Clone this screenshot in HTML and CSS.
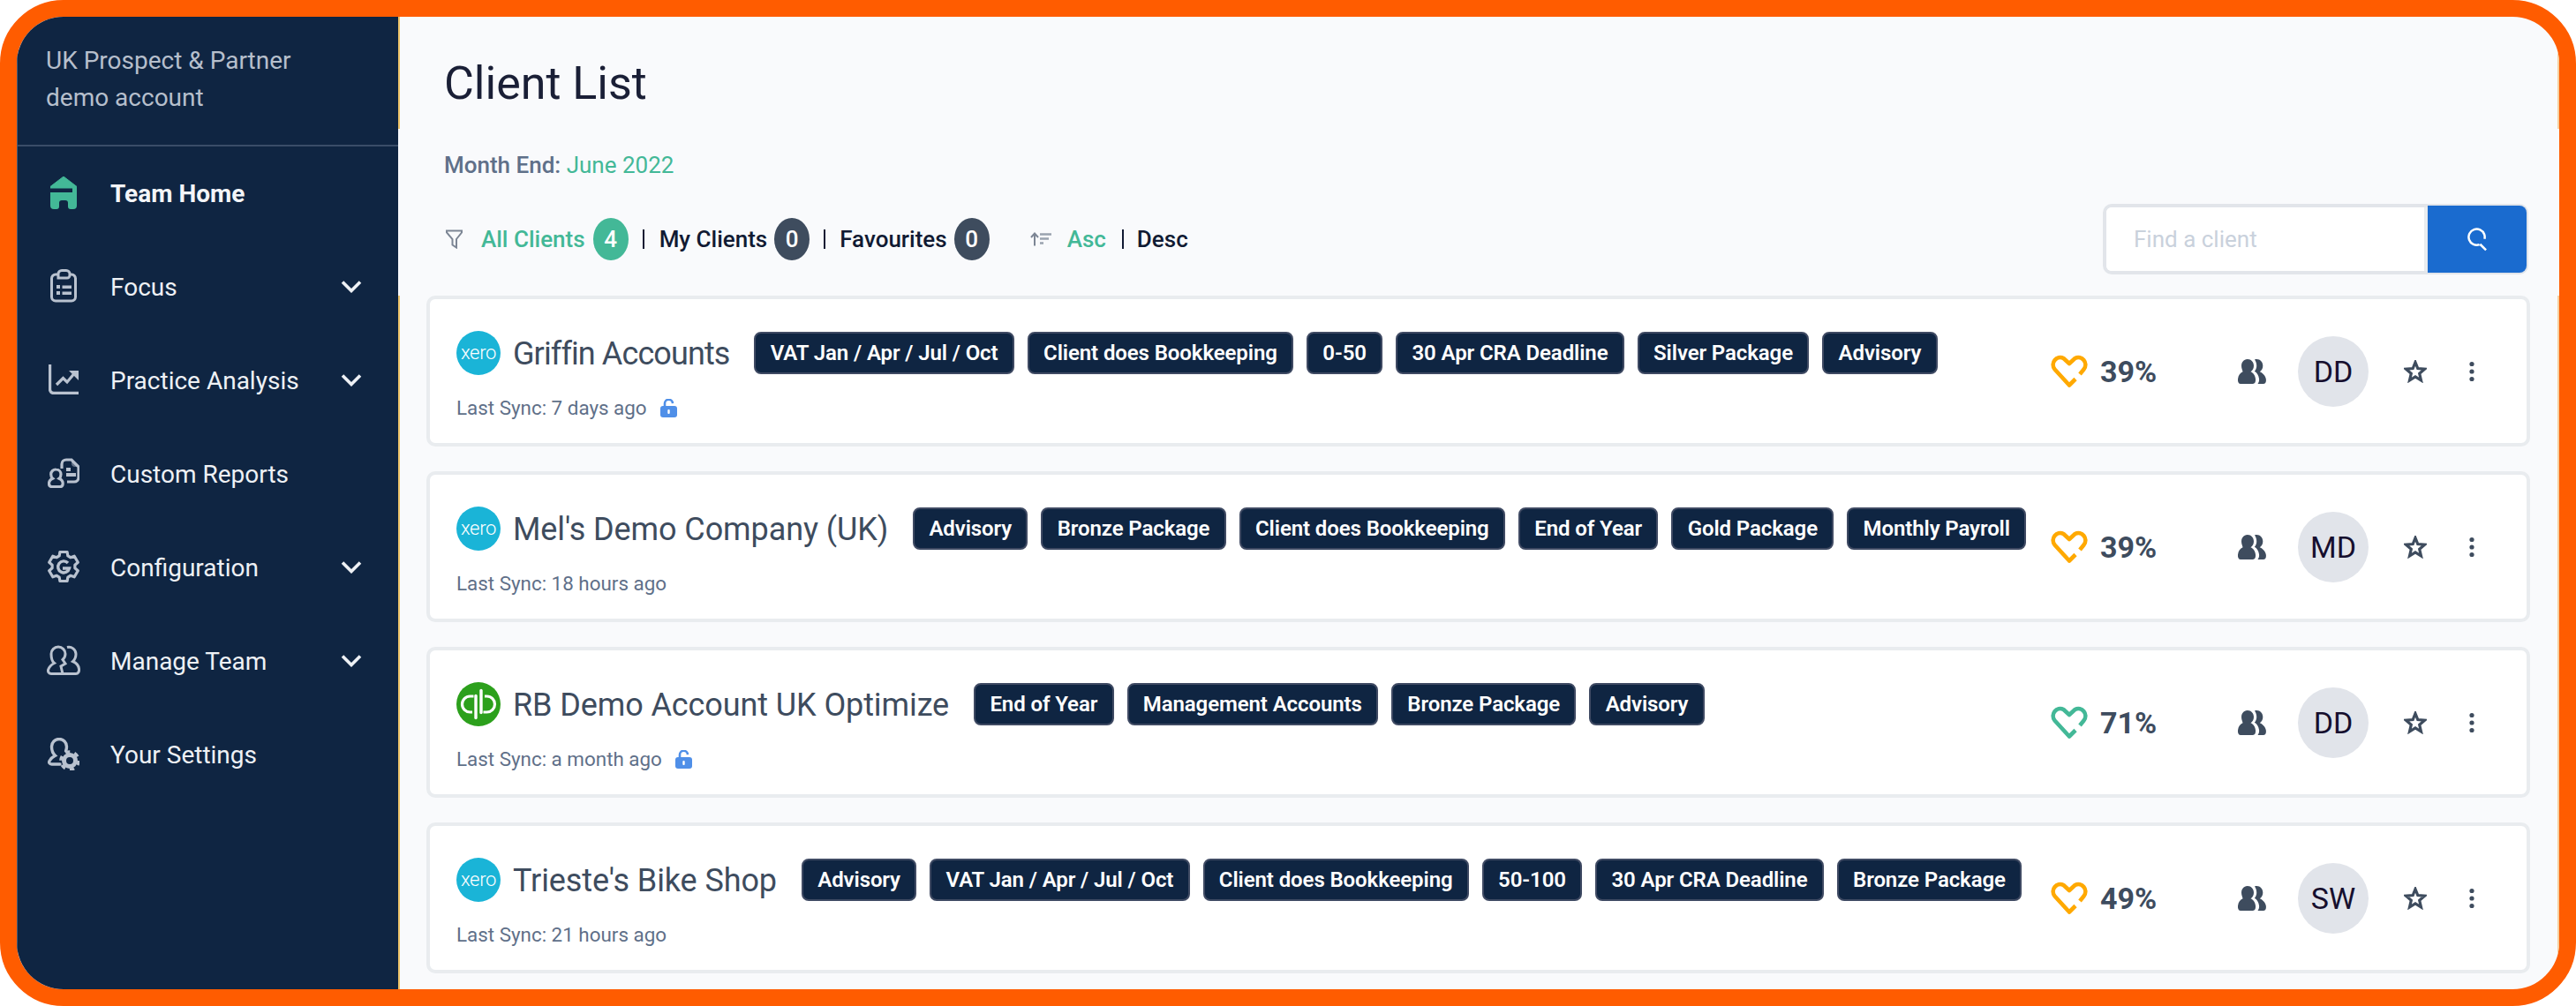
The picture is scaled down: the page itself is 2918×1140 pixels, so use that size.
FILE: index.html
```html
<!DOCTYPE html>
<html lang="en">
<head>
<meta charset="utf-8">
<title>Client List</title>
<link rel="stylesheet" href="styles.css">
</head>
<body>
<svg class="defs" width="0" height="0" aria-hidden="true">
  <defs>
    <symbol id="i-chev" viewBox="0 0 24 15"><path d="M2 2.500 12 12.500 22 2.500" fill="none" stroke="currentColor" stroke-width="3.600"/></symbol>
    <symbol id="i-heart" viewBox="0 0 42 37"><path d="M28 27.500 21 34.500 4.500 16.500C-1 9 7 0 14.500 4L21 10 27.500 4C35 0 43 9 37.500 16.500L33 22" fill="none" stroke="currentColor" stroke-width="4.600" stroke-linejoin="round"/></symbol>
    <symbol id="i-group" viewBox="0 0 32 28"><path d="M11 0c4 0 7 3.200 7 7.500 0 3-1.400 5.500-3.500 6.800 2.900 1.400 5 3.700 5.500 8.200.3 3-.6 5.500-3 5.500H3c-2.400 0-3.300-2.500-3-5.500.5-4.500 2.600-6.800 5.500-8.200C5.400 13 4 10.500 4 7.500 4 3.200 7 0 11 0Z" fill="currentColor"/><path d="M19 .4c.8-.3 1.500-.4 2.300-.4 4 0 7 3.200 7 7.500 0 3-1.400 5.500-3.500 6.800 3.200 1.500 6.400 4.300 7 8.200.5 3-.6 5.500-3 5.500h-6.300c1.400-1.700 1.800-3.800 1.500-6-.6-4-2.500-6.700-5.200-8.200 1.700-1.800 2.400-4 2.400-6.300 0-2.800-.8-5.300-2.200-7.100Z" fill="currentColor"/></symbol>
    <symbol id="i-star" viewBox="0 0 26 26"><path d="M13 2.500 15.800 9.500 23.500 10.200 17.700 15.300 19.500 23 13 19 6.500 23 8.300 15.300 2.500 10.200 10.200 9.500Z" fill="none" stroke="currentColor" stroke-width="3.200" stroke-linejoin="miter"/></symbol>
    <symbol id="i-dots" viewBox="0 0 8 24"><circle cx="4" cy="3.500" r="2.600" fill="currentColor"/><circle cx="4" cy="12" r="2.600" fill="currentColor"/><circle cx="4" cy="20.500" r="2.600" fill="currentColor"/></symbol>
    <symbol id="i-lock" viewBox="0 0 19 21"><path d="M5 8V5.500a4.500 4.500 0 0 1 9-.4" fill="none" stroke="currentColor" stroke-width="2.600"/><rect x="0" y="8" width="19" height="13" rx="3" fill="currentColor"/><rect x="8.300" y="12" width="2.400" height="5" rx="1" fill="#fff"/></symbol>
    <symbol id="i-qb" viewBox="0 0 50 50"><path d="M19.500 16H15.500a9 9 0 0 0 0 18H18" fill="none" stroke="#fff" stroke-width="3.200"/><path d="M22 15.500V40.500" fill="none" stroke="#fff" stroke-width="3.400" stroke-linecap="round"/><path d="M30.500 34H34.500a9 9 0 0 0 0-18H32" fill="none" stroke="#fff" stroke-width="3.200"/><path d="M28 9.500V34.500" fill="none" stroke="#fff" stroke-width="3.400" stroke-linecap="round"/></symbol>
  </defs>
</svg>
<div class="frame">
  <aside class="sidebar">
    <div class="account">UK Prospect &amp; Partner<br>demo account</div>
    <nav class="nav">
      <a class="nav-item active">
        <span class="nav-icon"><svg width="30" height="37" viewBox="0 0 30 37"><path d="M15 0 30 11.500V13H0V11.500Z" fill="#43b897" stroke="#43b897" stroke-linejoin="round"/><path d="M0 18H30V33a4 4 0 0 1-4 4H23a3 3 0 0 1-3-3V30a3 3 0 0 0-3-3H13a3 3 0 0 0-3 3v4a3 3 0 0 1-3 3H4a4 4 0 0 1-4-4Z" fill="#43b897"/><path d="M25 13h5v5h-5Z" fill="#43b897"/></svg></span>
        <span class="nav-label">Team Home</span>
      </a>
      <a class="nav-item">
        <span class="nav-icon"><svg width="30" height="38" viewBox="0 0 30 38"><path d="M9 6H6a4.500 4.500 0 0 0-4.500 4.500v21A4.500 4.500 0 0 0 6 36h18a4.500 4.500 0 0 0 4.500-4.500v-21A4.500 4.500 0 0 0 24 6h-1.500" fill="none" stroke="currentColor" stroke-width="3"/><path d="M9 10V5.500A4 4 0 0 1 13 1.500h5a4 4 0 0 1 4 4V7a3 3 0 0 1-3 3H9Z" fill="none" stroke="currentColor" stroke-width="3"/><path d="M7 18h4v4H7ZM7 25h4v4H7ZM13.500 18.500H24V22H13.500ZM13.500 25.500H24V29H13.500Z" fill="currentColor"/></svg></span>
        <span class="nav-label">Focus</span>
        <svg class="chev"><use href="#i-chev"/></svg>
      </a>
      <a class="nav-item">
        <span class="nav-icon"><svg width="34" height="34" viewBox="0 0 34 34"><path d="M1.500 0V28a4.500 4.500 0 0 0 4.500 4.500H34" fill="none" stroke="currentColor" stroke-width="3.400"/><path d="M9 23 16.500 15.500 21 20 31 8" fill="none" stroke="currentColor" stroke-width="3.200"/><path d="M23 7H34V18Z" fill="currentColor"/></svg></span>
        <span class="nav-label">Practice Analysis</span>
        <svg class="chev"><use href="#i-chev"/></svg>
      </a>
      <a class="nav-item">
        <span class="nav-icon"><svg width="36" height="34" viewBox="0 0 36 34"><path d="M16 12V7a5 5 0 0 1 5-5h6l8 8v12a5 5 0 0 1-5 5H22" fill="none" stroke="currentColor" stroke-width="3.200"/><path d="M27 2v4a4 4 0 0 0 4 4h4Z" fill="currentColor" opacity=".5"/><path d="M21 11h5v4h-5ZM21 17h11v4H21Z" fill="currentColor"/><path d="M9.500 13a5.500 5.500 0 0 1 5.500 5.500c0 2.200-.8 3.700-2 4.700 2.200 1 4.200 2.800 4.200 5.600 0 2.700-1 3.700-3 3.700H4.500c-2 0-3-1-3-3.700 0-2.800 2-4.600 4.200-5.600-1.200-1-2-2.500-2-4.700A5.500 5.500 0 0 1 9.500 13Z" fill="none" stroke="currentColor" stroke-width="3.200"/></svg></span>
        <span class="nav-label">Custom Reports</span>
      </a>
      <a class="nav-item">
        <span class="nav-icon"><svg width="36" height="38" viewBox="0 0 36 38"><path d="M13.130 6.950 13.890 2.500H22.110L22.870 6.950 26 8.760 30.200 7.200 34.300 14.300 30.870 17.190V20.810L34.300 23.700 30.200 30.800 26 29.240 22.870 31.050 22.110 35.500H13.890L13.130 31.050 10 29.240 5.800 30.800 1.700 23.700 5.130 20.810V17.190L1.700 14.300 5.800 7.200 10 8.760Z" fill="none" stroke="currentColor" stroke-width="3.200" stroke-linejoin="round"/><path d="M23 15A6.500 6.500 0 1 0 24.500 21H17" fill="none" stroke="currentColor" stroke-width="3.400"/></svg></span>
        <span class="nav-label">Configuration</span>
        <svg class="chev"><use href="#i-chev"/></svg>
      </a>
      <a class="nav-item">
        <span class="nav-icon"><svg width="38" height="34" viewBox="0 0 38 34"><path d="M13 2a8 8 0 0 1 8 8c0 3-1.200 5-3 6.500L21 21l-5 3 2 8.500H5a3.500 3.500 0 0 1-3.400-4.500c1-3.500 3.900-6 6.900-7.500C6 18.500 5 15 5 10a8 8 0 0 1 8-8Z" fill="none" stroke="currentColor" stroke-width="3"/><path d="M23 2.500A8 8 0 0 1 33 10c0 3.500-1.300 6.500-3.500 8.500 3.500 1.500 6.500 4.500 7 8.500.4 3-1 5.500-3.500 5.500H18" fill="none" stroke="currentColor" stroke-width="3"/></svg></span>
        <span class="nav-label">Manage Team</span>
        <svg class="chev"><use href="#i-chev"/></svg>
      </a>
      <a class="nav-item">
        <span class="nav-icon"><svg width="36" height="37" viewBox="0 0 36 37"><path d="M14 30H4.500c-2.500 0-3.500-2-2.300-4 1.300-2.200 4-4.500 6.300-5.700C6 18 4.500 14.500 4.500 10a8.500 8.500 0 0 1 17 0c0 2-.3 3.500-.9 5" fill="none" stroke="currentColor" stroke-width="3.400" stroke-linecap="round"/><circle cx="25" cy="26" r="6.500" fill="none" stroke="currentColor" stroke-width="5"/><circle cx="25" cy="26" r="10" fill="none" stroke="currentColor" stroke-width="3.600" stroke-dasharray="5.200 5.270"/></svg></span>
        <span class="nav-label">Your Settings</span>
      </a>
    </nav>
  </aside>
  <main class="main">
    <section class="head">
      <h1 class="title">Client List</h1>
    </section>
    <section class="controls">
      <div class="month"><span class="month-key">Month End:</span> <span class="green">June 2022</span></div>
      <div class="toolbar">
        <div class="filters">
          <svg class="filter-icon" width="19" height="22" viewBox="0 0 19 22"><path d="M1 1.500H18V3.500L12 11V20.500L7.500 17.500V11L1 3.500Z" fill="none" stroke="#7c8594" stroke-width="2"/></svg>
          <span class="flt green">All Clients</span><span class="badge badge-green">4</span>
          <span class="sep"></span>
          <span class="flt">My Clients</span><span class="badge">0</span>
          <span class="sep sep-tight"></span>
          <span class="flt">Favourites</span><span class="badge">0</span>
          <svg class="sort-icon" width="24" height="16" viewBox="0 0 24 16"><path d="M5 15.500V2M1 6 5 1.500 9 6" fill="none" stroke="#7c8594" stroke-width="2"/><path d="M11 2.500H24M11 7.500H21M11 12.500H15" fill="none" stroke="#9aa3af" stroke-width="2.400"/></svg>
          <span class="flt green">Asc</span>
          <span class="sep sep-sort"></span>
          <span class="flt">Desc</span>
        </div>
        <form class="search">
          <input class="search-input" type="text" placeholder="Find a client">
          <button class="search-btn" type="button" aria-label="Search"><svg width="23" height="28" viewBox="0 0 24 29"><circle cx="11" cy="12" r="9.500" fill="none" stroke="#fff" stroke-width="2.600" stroke-dasharray="50 10" transform="rotate(70 11 12)"/><path d="M15 20.500 22 27.500" fill="none" stroke="#fff" stroke-width="2.600"/></svg></button>
        </form>
      </div>
    </section>
    <section class="list">
      <article class="card">
        <div class="card-left">
          <div class="card-top">
            <span class="logo logo-xero">xero</span>
            <span class="name name-tight">Griffin Accounts</span>
            <span class="tags">
              <span class="tag">VAT Jan / Apr / Jul / Oct</span><span class="tag">Client does Bookkeeping</span><span class="tag">0-50</span><span class="tag">30 Apr CRA Deadline</span><span class="tag">Silver Package</span><span class="tag">Advisory</span>
            </span>
          </div>
          <div class="sync">Last Sync: 7 days ago <svg class="lock"><use href="#i-lock"/></svg></div>
        </div>
        <div class="card-right">
          <svg class="heart amber"><use href="#i-heart"/></svg><span class="pct">39%</span>
          <svg class="group"><use href="#i-group"/></svg>
          <span class="avatar">DD</span>
          <svg class="star"><use href="#i-star"/></svg>
          <svg class="dots"><use href="#i-dots"/></svg>
        </div>
      </article>
      <article class="card">
        <div class="card-left">
          <div class="card-top">
            <span class="logo logo-xero">xero</span>
            <span class="name">Mel's Demo Company (UK)</span>
            <span class="tags">
              <span class="tag">Advisory</span><span class="tag">Bronze Package</span><span class="tag">Client does Bookkeeping</span><span class="tag">End of Year</span><span class="tag">Gold Package</span><span class="tag">Monthly Payroll</span>
            </span>
          </div>
          <div class="sync">Last Sync: 18 hours ago</div>
        </div>
        <div class="card-right">
          <svg class="heart amber"><use href="#i-heart"/></svg><span class="pct">39%</span>
          <svg class="group"><use href="#i-group"/></svg>
          <span class="avatar">MD</span>
          <svg class="star"><use href="#i-star"/></svg>
          <svg class="dots"><use href="#i-dots"/></svg>
        </div>
      </article>
      <article class="card">
        <div class="card-left">
          <div class="card-top">
            <span class="logo logo-qb"><svg width="50" height="50"><use href="#i-qb"/></svg></span>
            <span class="name">RB Demo Account UK Optimize</span>
            <span class="tags">
              <span class="tag">End of Year</span><span class="tag">Management Accounts</span><span class="tag">Bronze Package</span><span class="tag">Advisory</span>
            </span>
          </div>
          <div class="sync">Last Sync: a month ago <svg class="lock"><use href="#i-lock"/></svg></div>
        </div>
        <div class="card-right">
          <svg class="heart teal"><use href="#i-heart"/></svg><span class="pct">71%</span>
          <svg class="group"><use href="#i-group"/></svg>
          <span class="avatar">DD</span>
          <svg class="star"><use href="#i-star"/></svg>
          <svg class="dots"><use href="#i-dots"/></svg>
        </div>
      </article>
      <article class="card">
        <div class="card-left">
          <div class="card-top">
            <span class="logo logo-xero">xero</span>
            <span class="name">Trieste's Bike Shop</span>
            <span class="tags">
              <span class="tag">Advisory</span><span class="tag">VAT Jan / Apr / Jul / Oct</span><span class="tag">Client does Bookkeeping</span><span class="tag">50-100</span><span class="tag">30 Apr CRA Deadline</span><span class="tag">Bronze Package</span>
            </span>
          </div>
          <div class="sync">Last Sync: 21 hours ago</div>
        </div>
        <div class="card-right">
          <svg class="heart amber"><use href="#i-heart"/></svg><span class="pct">49%</span>
          <svg class="group"><use href="#i-group"/></svg>
          <span class="avatar">SW</span>
          <svg class="star"><use href="#i-star"/></svg>
          <svg class="dots"><use href="#i-dots"/></svg>
        </div>
      </article>
    </section>
  </main>
</div>
</body>
</html>
```

FILE: styles.css
```css
* { box-sizing: border-box; }
html, body { margin: 0; padding: 0; background: #fff; }
body { font-family: Roboto, "Liberation Sans", sans-serif; overflow: hidden; }
.defs { position: absolute; }

.frame {
  width: 2918px;
  height: 1140px;
  border: 19px solid #ff5c00;
  border-radius: 72px;
  overflow: hidden;
  display: flex;
  background: #f9fafc;
}

/* Sidebar */
.sidebar {
  width: 432px;
  flex: none;
  background: #0f2542;
  border-left: 1px solid #4a5b72;
  color: #eef1f5;
}
.account {
  height: 147px;
  padding: 29px 0 0 32px;
  font-size: 28px;
  line-height: 42px;
  color: #b6bfcc;
  border-bottom: 2px solid #3a4d68;
}
.nav { margin-top: -1px; }
.nav-item {
  height: 106px;
  display: flex;
  align-items: center;
  padding: 0 41px 0 32px;
  font-size: 28px;
  color: #eef1f5;
}
.nav-item.active { font-weight: 700; color: #f3f5f8; }
.nav-icon {
  width: 40px;
  margin-right: 33px;
  flex: none;
  display: flex;
  justify-content: center;
  color: #b9c2cf;
}
.nav-label { flex: 1; padding-top: 2px; }
.chev { width: 24px; height: 15px; color: #eef1f5; }

/* Main */
.main { flex: 1; min-width: 0; display: flex; flex-direction: column; }
.head {
  height: 127px;
  padding: 46px 0 0 50px;
  border-left: 2px solid #eec46a;
  border-right: 2px solid #f6cf9e;
}
.title {
  margin: 0;
  font-size: 52px;
  line-height: 60px;
  font-weight: 400;
  color: #1a1f36;
}
.controls { height: 189px; padding: 26px 35px 0 52px; }
.month { font-size: 26px; line-height: 30px; font-weight: 400; }
.month-key { font-weight: 500; color: #5f7089; }
.green { color: #43b897; }
.toolbar {
  margin-top: 29px;
  height: 80px;
  display: flex;
  align-items: center;
  justify-content: space-between;
}
.filters { display: flex; align-items: center; font-size: 26px; font-weight: 500; color: #111a33; }
.filter-icon { margin: 0 21px 0 2px; }
.flt { white-space: nowrap; }
.badge {
  width: 40px;
  height: 48px;
  margin-left: 8px;
  border-radius: 20px / 24px;
  background: #3e4c5e;
  color: #fff;
  display: flex;
  align-items: center;
  justify-content: center;
}
.badge-green { background: #43b897; margin-left: 9px; }
.sep { width: 2px; height: 22px; margin: 0 17px 0 16px; background: #111a33; }
.sep-tight { margin: 0 16px 0 16px; }
.sep-sort { margin: 0 15px 0 18px; }
.sort-icon { margin: 0 18px 0 46px; }

.search {
  width: 482px;
  height: 80px;
  display: flex;
  border: 4px solid #e2e5ea;
  border-radius: 10px;
  background: #fff;
  margin: 0;
}
.search-input {
  flex: 1;
  min-width: 0;
  border: 0;
  outline: 0;
  border-right: 4px solid #e9ecef;
  border-radius: 6px 0 0 6px;
  background: #fff;
  padding: 0 0 0 31px;
  font: 400 26px Roboto, sans-serif;
}
.search-input::placeholder { color: #c9d1dc; opacity: 1; }
.search-btn {
  width: 112px;
  margin: -2px -2px -2px 0;
  border: 0;
  padding: 0;
  border-radius: 0 8px 8px 0;
  background: #1a6bcf;
  display: flex;
  align-items: center;
  justify-content: center;
}

/* List */
.list {
  flex: 1;
  min-height: 0;
  padding: 0 31px 0 30px;
  border-left: 2px solid #eec46a;
  border-right: 2px solid #f6cf9e;
  display: flex;
  flex-direction: column;
  gap: 28px;
}
.card {
  height: 171px;
  flex: none;
  background: #fff;
  border: 4px solid #e9ecef;
  border-radius: 10px;
  padding: 36px 0 0 30px;
  display: flex;
  justify-content: space-between;
}
.card-left { min-width: 0; }
.card-top { display: flex; align-items: center; height: 50px; }
.logo {
  width: 50px;
  height: 50px;
  flex: none;
  border-radius: 50%;
  margin-right: 14px;
  display: flex;
  align-items: center;
  justify-content: center;
}
.logo-xero { background: #1ab4d7; color: #fff; font-size: 22px; font-weight: 300; letter-spacing: -.3px; padding-bottom: 2px; }
.logo-qb { background: #2ca01c; }
.name { font-size: 36px; font-weight: 400; color: #3e4c5e; white-space: nowrap; margin-right: 28px; padding-top: 2px; letter-spacing: -.1px; }
.name-tight { letter-spacing: -.9px; }
.tags { display: flex; gap: 15px; }
.tag {
  height: 48px;
  padding: 0 16.300px;
  display: flex;
  align-items: center;
  white-space: nowrap;
  font-size: 24px;
  font-weight: 600;
  letter-spacing: -.1px;
  color: #fff;
  background: #0f2542;
  border: 2px solid #3f4a63;
  border-radius: 8px;
}
.sync {
  margin-top: 22px;
  height: 30px;
  display: flex;
  align-items: center;
  font-size: 22.400px;
  color: #5f7089;
}
.lock { width: 19px; height: 21px; margin-left: 15px; color: #4f8fe8; }

.card-right {
  width: 539px;
  flex: none;
  margin-top: -36px;
  display: flex;
  align-items: center;
  color: #3e4c5e;
}
.heart { width: 42px; height: 37px; margin: 0 14px 0 0; flex: none; }
.amber { color: #ffa900; }
.teal { color: #43b897; }
.pct { width: 65px; font-size: 34px; font-weight: 700; color: #3e4c5e; }
.group { width: 32px; height: 28px; margin-left: 91px; flex: none; }
.avatar {
  width: 80px;
  height: 80px;
  margin-left: 36px;
  flex: none;
  border-radius: 50%;
  background: #e1e4ea;
  color: #160f2e;
  font-size: 34px;
  display: flex;
  align-items: center;
  justify-content: center;
}
.star { width: 26px; height: 26px; margin-left: 40px; flex: none; }
.dots { width: 8px; height: 24px; margin-left: 47px; flex: none; }
```
